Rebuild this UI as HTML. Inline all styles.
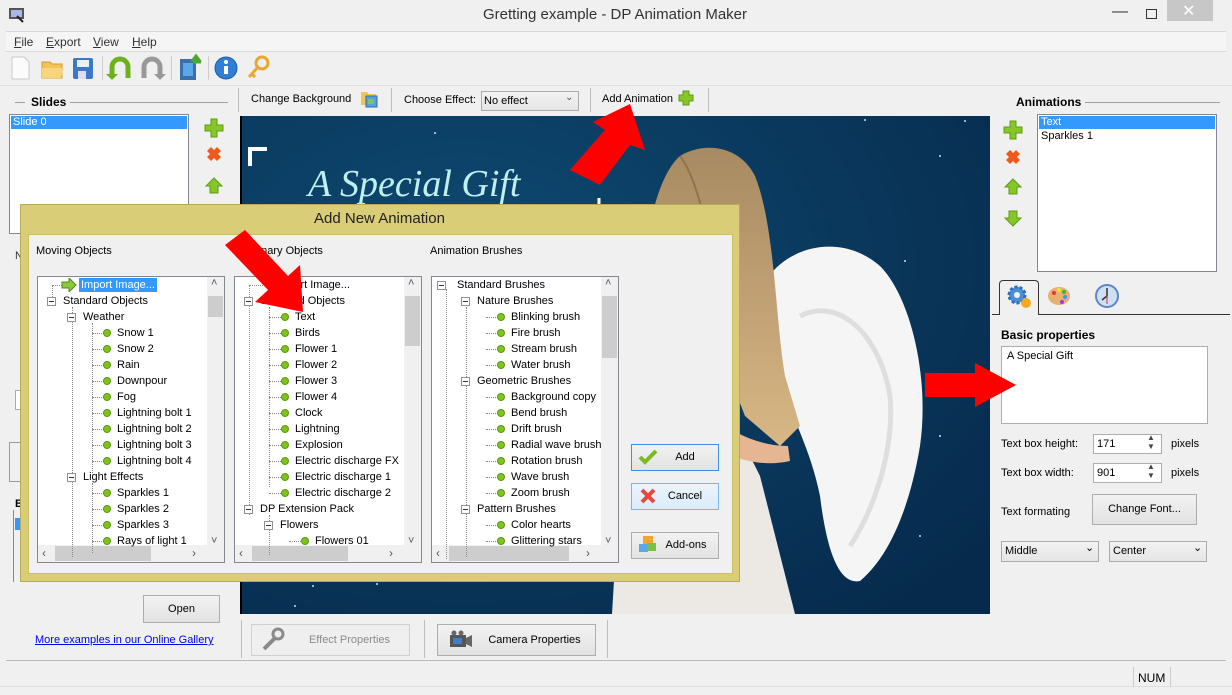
<!DOCTYPE html>
<html><head><meta charset="utf-8"><style>
*{box-sizing:border-box;margin:0;padding:0}
body{width:1232px;height:695px;overflow:hidden;background:#f0f0f0;font-family:"Liberation Sans",Arial,sans-serif;font-size:11px;color:#000;position:relative}
.a{position:absolute}
.t{position:absolute;white-space:nowrap}
.sep{position:absolute;width:1px;background:#bdbdbd}
.btn{position:absolute;border:1px solid #adadad;background:linear-gradient(#f2f2f2,#e2e2e2);text-align:center}
.tree{position:absolute;background:#fff;border:1px solid #828790;overflow:hidden}
.row{position:absolute;height:16px;line-height:16px;white-space:nowrap}
.dot{position:absolute;width:8px;height:8px;border-radius:50%;background:#7fc31c;border:1px solid #5a9a10}
.mn{position:absolute;width:9px;height:9px;border:1px solid #919191;background:#fff}
.mn:after{content:"";position:absolute;left:1px;top:3px;width:5px;height:1px;background:#333}
.hl{position:absolute;border-top:1px dotted #888;height:0}
.vl{position:absolute;border-left:1px dotted #888;width:0}
.vs{position:absolute;right:0;top:0;width:17px;bottom:17px;background:#f0f0f0}
.hs{position:absolute;left:0;right:0;bottom:0;height:17px;background:#f0f0f0}
</style></head><body>

<!-- title bar -->
<div class="a" style="left:0;top:0;width:1232px;height:31px;background:#f0f0f0"></div>
<svg class="a" style="left:8px;top:6px" width="18" height="18"><rect x="1" y="2" width="15" height="11" fill="#555"/><rect x="3" y="4" width="11" height="7" fill="#a8b8e8"/><path d="M9 10l6 6" stroke="#222" stroke-width="2"/></svg>
<div class="t" style="left:483px;top:6px;font-size:15px;color:#333">Gretting example - DP Animation Maker</div>
<div class="t" style="left:1112px;top:3px;font-size:16px;color:#333">—</div>
<div class="a" style="left:1146px;top:9px;width:11px;height:10px;border:1px solid #333"></div>
<div class="a" style="left:1167px;top:0;width:46px;height:21px;background:#c7c7c7"></div>
<div class="t" style="left:1182px;top:1px;font-size:16px;color:#fff">✕</div>

<!-- menu -->
<div class="a" style="left:6px;top:31px;width:1220px;height:21px;border-top:1px solid #d8d8d8;border-bottom:1px solid #d8d8d8;background:#f5f5f5"></div>
<div class="t" style="left:14px;top:35px;color:#333;font-size:12px"><u>F</u>ile</div>
<div class="t" style="left:46px;top:35px;color:#333;font-size:12px"><u>E</u>xport</div>
<div class="t" style="left:93px;top:35px;color:#333;font-size:12px"><u>V</u>iew</div>
<div class="t" style="left:132px;top:35px;color:#333;font-size:12px"><u>H</u>elp</div>

<!-- toolbar -->
<svg class="a" style="left:0;top:52px" width="280" height="32">
<path d="M12 5h12l5 5v17H12z" fill="#fbfbfb" stroke="#c8c8c8"/>
<path d="M42 10h8l2 2h10v14H42z" fill="#f3c35a" stroke="#d49b2a"/><path d="M42 16h22l-3 10H42z" fill="#f8d57a"/>
<rect x="73" y="6" width="20" height="21" rx="2" fill="#3c78c8"/><rect x="77" y="8" width="12" height="7" fill="#e8f0f8"/><rect x="78" y="19" width="8" height="8" fill="#dde"/>
<rect x="102" y="4" width="1" height="24" fill="#ccc"/>
<path d="M112 26V15a8 8 0 0 1 16 0v11" fill="none" stroke="#6db11c" stroke-width="5"/><path d="M106 22l6 6 6-6z" fill="#6db11c"/>
<path d="M144 26V15a8 8 0 0 1 16 0v11" fill="none" stroke="#999" stroke-width="5"/><path d="M154 22l6 6 6-6z" fill="#999"/>
<rect x="171" y="4" width="1" height="24" fill="#ccc"/>
<rect x="180" y="7" width="16" height="21" fill="#3a6fa8"/><rect x="183" y="11" width="10" height="13" fill="#5aa8e8"/><path d="M193 8h6l-3-4z M193 10h8" stroke="#4ca833" stroke-width="3" fill="#4ca833"/>
<rect x="208" y="4" width="1" height="24" fill="#ccc"/>
<circle cx="226" cy="16" r="11" fill="#2f7fd4" stroke="#1c5ea8"/><rect x="224" y="14" width="4" height="8" fill="#fff"/><circle cx="226" cy="10" r="2" fill="#fff"/>
<circle cx="262" cy="11" r="6" fill="none" stroke="#e8a830" stroke-width="3"/><path d="M258 15l-9 10M252 22l3 3" stroke="#e8a830" stroke-width="3"/>
</svg>
<div class="a" style="left:0;top:85px;width:1232px;height:1px;background:#e0e0e0"></div>

<!-- left panel -->
<div class="a" style="left:15px;top:102px;width:10px;height:1px;background:#a0a0a0"></div>
<div class="t" style="left:31px;top:95px;font-weight:bold;font-size:12px">Slides</div>
<div class="a" style="left:70px;top:102px;width:158px;height:1px;background:#a0a0a0"></div>
<div class="a" style="left:9px;top:114px;width:180px;height:120px;background:#fff;border:1px solid #828790"></div>
<div class="a" style="left:11px;top:116px;width:176px;height:13px;background:#3399ff"></div>
<div class="t" style="left:13px;top:116px;color:#fff">Slide 0</div>
<svg class="a" style="left:204px;top:118px" width="20" height="80">
<path d="M7 1h6v6h6v6h-6v6H7v-6H1V7h6z" fill="#86c628" stroke="#5e9b12"/>
<path d="M3 33l4-4 3 3 3-3 4 4-3 3 3 3-4 4-3-3-3 3-4-4 3-3z" fill="#ee5a1c"/>
<path d="M10 60l8 8h-4v7H6v-7H2z" fill="#86c628" stroke="#5e9b12"/>
</svg>
<div class="t" style="left:15px;top:250px;color:#333">N</div>
<div class="a" style="left:15px;top:390px;width:6px;height:20px;border:1px solid #aaa;background:#fff"></div>
<div class="a" style="left:9px;top:442px;width:12px;height:40px;border:1px solid #999"></div>
<div class="t" style="left:15px;top:498px;font-weight:bold">B</div>
<div class="a" style="left:15px;top:518px;width:8px;height:12px;background:#3399ff"></div>
<div class="a" style="left:13px;top:510px;width:10px;height:72px;border-left:1px solid #888"></div>
<div class="btn" style="left:143px;top:595px;width:77px;height:28px;line-height:26px">Open</div>
<div class="t" style="left:35px;top:634px;color:#00e;text-decoration:underline">More examples in our Online Gallery</div>

<!-- center toolbar -->
<div class="sep" style="left:238px;top:88px;height:24px"></div>
<div class="t" style="left:251px;top:93px">Change Background</div>
<svg class="a" style="left:360px;top:90px" width="18" height="18"><path d="M1 2h6l2 2h7v11H1z" fill="#f3c35a"/><rect x="6" y="6" width="11" height="11" fill="#5aa0dd" stroke="#2b6fb0"/><rect x="8" y="9" width="6" height="5" fill="#7ec36a"/></svg>
<div class="sep" style="left:391px;top:88px;height:24px"></div>
<div class="t" style="left:404px;top:94px">Choose Effect:</div>
<div class="a" style="left:481px;top:91px;width:98px;height:20px;border:1px solid #acacac;background:linear-gradient(#f2f2f2,#e5e5e5)"></div>
<div class="t" style="left:484px;top:95px">No effect</div>
<div class="t" style="left:565px;top:92px;font-size:10px;color:#555">⌄</div>
<div class="sep" style="left:590px;top:88px;height:24px"></div>
<div class="t" style="left:602px;top:93px">Add Animation</div>
<svg class="a" style="left:678px;top:90px" width="16" height="16"><path d="M5 1h6v4h4v6h-4v4H5v-4H1V5h4z" fill="#86c628" stroke="#5e9b12"/></svg>
<div class="sep" style="left:708px;top:88px;height:24px"></div>

<!-- canvas -->
<svg class="a" style="left:240px;top:116px" width="750" height="498">
<defs><radialGradient id="bg" cx="0.3" cy="0.3" r="0.9"><stop offset="0" stop-color="#0f4a72"/><stop offset="1" stop-color="#062a4c"/></radialGradient>
<linearGradient id="hair" x1="0" x2="0" y1="0" y2="1"><stop offset="0" stop-color="#a88a62"/><stop offset="1" stop-color="#d8b785"/></linearGradient></defs>
<rect width="750" height="498" fill="url(#bg)"/>
<rect x="0" y="0" width="2" height="498" fill="#000"/>
<!-- dress -->
<path d="M385 280 L480 280 L520 360 L555 498 L372 498 Z" fill="#ece8e3"/>
<!-- wings -->
<path d="M520 175 C540 130 600 115 640 150 C670 180 690 260 680 330 C670 390 650 440 620 465 C595 470 585 420 580 380 C570 330 550 300 540 260 C525 230 515 200 520 175Z" fill="#f5f5f5"/>
<path d="M560 200 C600 180 640 220 650 280 C655 340 630 400 610 430" fill="none" stroke="#dedede" stroke-width="5"/>
<!-- hair -->
<path d="M400 300 C392 200 405 70 440 40 C465 25 500 30 515 60 C535 110 535 200 545 260 L560 310 L540 330 L505 300 L470 210 L440 250 L420 300Z" fill="url(#hair)"/>
<path d="M440 40 C455 60 465 100 470 140" stroke="#8f7450" stroke-width="2" fill="none"/>
<!-- arm -->
<path d="M470 300 C495 318 520 330 548 330 L550 345 C520 352 485 342 462 322Z" fill="#e6b692"/>
<text x="68" y="80" font-family="Liberation Serif,serif" font-style="italic" font-size="38" fill="#bff0f0">A Special Gift</text>
<path d="M10 50V33h17" fill="none" stroke="#fff" stroke-width="4"/>
<path d="M359 88v-6M10 88v8" stroke="#fff" stroke-width="3"/>
<g fill="#cde">
<circle cx="195" cy="17" r="1"/><circle cx="367" cy="4" r="1"/><circle cx="625" cy="4" r="1"/><circle cx="725" cy="5" r="1"/><circle cx="700" cy="40" r="1"/><circle cx="665" cy="145" r="1"/><circle cx="700" cy="320" r="1"/><circle cx="680" cy="420" r="1"/><circle cx="73" cy="470" r="1"/><circle cx="137" cy="468" r="1"/><circle cx="55" cy="490" r="1"/>
</g>
</svg>

<!-- bottom center buttons -->
<div class="sep" style="left:241px;top:620px;height:38px"></div>
<div class="btn" style="left:251px;top:624px;width:159px;height:32px;background:#efefef;border-color:#d0d0d0;color:#8a8a8a;line-height:30px;padding-left:38px">Effect Properties</div>
<svg class="a" style="left:260px;top:627px" width="26" height="26"><path d="M4 22l12-12" stroke="#8a8a8a" stroke-width="4"/><circle cx="18" cy="7" r="5" fill="none" stroke="#8a8a8a" stroke-width="3"/></svg>
<div class="sep" style="left:424px;top:620px;height:38px"></div>
<div class="btn" style="left:437px;top:624px;width:159px;height:32px;line-height:30px;padding-left:36px">Camera Properties</div>
<svg class="a" style="left:448px;top:630px" width="26" height="20"><rect x="2" y="5" width="16" height="12" fill="#555"/><rect x="5" y="8" width="9" height="6" fill="#3a7fd0"/><path d="M18 8l6-3v12l-6-3z" fill="#666"/><circle cx="6" cy="3" r="2.5" fill="#666"/><circle cx="13" cy="3" r="2.5" fill="#666"/></svg>
<div class="sep" style="left:607px;top:620px;height:38px"></div>

<!-- right panel -->
<div class="t" style="left:1016px;top:95px;font-weight:bold;font-size:12px">Animations</div>
<div class="a" style="left:1085px;top:102px;width:135px;height:1px;background:#a0a0a0"></div>
<div class="a" style="left:1037px;top:114px;width:180px;height:158px;background:#fff;border:1px solid #828790"></div>
<div class="a" style="left:1039px;top:116px;width:176px;height:13px;background:#3399ff"></div>
<div class="t" style="left:1041px;top:116px;color:#fff">Text</div>
<div class="t" style="left:1041px;top:130px">Sparkles 1</div>
<svg class="a" style="left:1003px;top:120px" width="20" height="110">
<path d="M7 1h6v6h6v6h-6v6H7v-6H1V7h6z" fill="#86c628" stroke="#5e9b12"/>
<path d="M3 34l4-4 3 3 3-3 4 4-3 3 3 3-4 4-3-3-3 3-4-4 3-3z" fill="#ee5a1c"/>
<path d="M10 59l8 8h-4v7H6v-7H2z" fill="#86c628" stroke="#5e9b12"/>
<path d="M10 106l8-8h-4v-7H6v7H2z" fill="#86c628" stroke="#5e9b12"/>
</svg>
<div class="a" style="left:992px;top:314px;width:238px;height:1px;background:#333"></div>
<div class="a" style="left:999px;top:280px;width:40px;height:35px;border:1px solid #333;border-bottom:none;border-radius:4px 4px 0 0;background:#f0f0f0"></div>
<svg class="a" style="left:1005px;top:283px" width="120" height="28">
<circle cx="12" cy="12" r="8" fill="#4b8fd8" stroke="#2d6fb8" stroke-width="3" stroke-dasharray="3 2"/><circle cx="12" cy="12" r="3" fill="#f0f0f0"/><circle cx="21" cy="20" r="5" fill="#f3a820"/>
<ellipse cx="54" cy="13" rx="11" ry="9" fill="#e8b070"/><circle cx="49" cy="10" r="2" fill="#e33"/><circle cx="54" cy="7" r="2" fill="#fd3"/><circle cx="59" cy="9" r="2" fill="#3b3"/><circle cx="60" cy="14" r="2" fill="#39f"/><circle cx="57" cy="19" r="2" fill="#a3d"/>
<circle cx="102" cy="13" r="11" fill="#cfe0f5" stroke="#5a88c8" stroke-width="2"/><path d="M102 5v8l-5 4" stroke="#333" stroke-width="1.5" fill="none"/><path d="M102 13v8" stroke="#c33"/>
</svg>
<div class="t" style="left:1001px;top:328px;font-weight:bold;font-size:12px">Basic properties</div>
<div class="a" style="left:1001px;top:346px;width:207px;height:78px;background:#fff;border:1px solid #abadb3"></div>
<div class="t" style="left:1007px;top:350px">A Special Gift</div>
<div class="t" style="left:1001px;top:438px">Text box height:</div>
<div class="a" style="left:1093px;top:434px;width:69px;height:20px;background:#fff;border:1px solid #abadb3"></div>
<div class="t" style="left:1097px;top:438px">171</div>
<div class="t" style="left:1147px;top:433px;font-size:8px;line-height:9px;color:#444">▲<br>▼</div>
<div class="t" style="left:1171px;top:438px">pixels</div>
<div class="t" style="left:1001px;top:467px">Text box width:</div>
<div class="a" style="left:1093px;top:463px;width:69px;height:20px;background:#fff;border:1px solid #abadb3"></div>
<div class="t" style="left:1097px;top:467px">901</div>
<div class="t" style="left:1147px;top:462px;font-size:8px;line-height:9px;color:#444">▲<br>▼</div>
<div class="t" style="left:1171px;top:467px">pixels</div>
<div class="t" style="left:1001px;top:506px">Text formating</div>
<div class="btn" style="left:1092px;top:494px;width:105px;height:31px;line-height:29px">Change Font...</div>
<div class="a" style="left:1001px;top:541px;width:98px;height:21px;border:1px solid #acacac;background:linear-gradient(#f2f2f2,#e5e5e5)"></div>
<div class="t" style="left:1005px;top:545px">Middle</div>
<div class="t" style="left:1085px;top:541px;font-size:11px">⌄</div>
<div class="a" style="left:1109px;top:541px;width:98px;height:21px;border:1px solid #acacac;background:linear-gradient(#f2f2f2,#e5e5e5)"></div>
<div class="t" style="left:1113px;top:545px">Center</div>
<div class="t" style="left:1193px;top:541px;font-size:11px">⌄</div>

<!-- status bar -->
<div class="a" style="left:6px;top:660px;width:1220px;height:1px;background:#bbb"></div>
<div class="a" style="left:0;top:686px;width:1232px;height:1px;background:#ddd"></div>
<div class="a" style="left:1133px;top:667px;width:38px;height:20px;border-left:1px solid #ccc;border-right:1px solid #ccc"></div>
<div class="t" style="left:1138px;top:671px;font-size:12px">NUM</div>

<!-- dialog -->
<div class="a" style="left:20px;top:204px;width:720px;height:378px;background:#d9cd78;border:1px solid #b8a958"></div>
<div class="t" style="left:314px;top:210px;font-size:15px;color:#222">Add New Animation</div>
<div class="a" style="left:28px;top:234px;width:705px;height:340px;background:#f0f0f0;border:1px solid #c9bd69"></div>
<div class="t" style="left:36px;top:245px">Moving Objects</div>
<div class="t" style="left:233px;top:245px">Stationary Objects</div>
<div class="t" style="left:430px;top:245px">Animation Brushes</div>

<!-- tree 1 -->
<div class="tree" style="left:37px;top:276px;width:188px;height:287px">
 <div class="vs"><div class="t" style="left:4px;top:0;font-size:11px;color:#555">˄</div><div class="a" style="left:1px;top:19px;width:15px;height:21px;background:#cdcdcd"></div><div class="t" style="left:4px;bottom:-2px;font-size:11px;color:#555">˅</div></div>
 <div class="hs"><div class="t" style="left:4px;top:1px;font-size:12px;color:#555">‹</div><div class="a" style="left:17px;top:1px;width:96px;height:15px;background:#cdcdcd"></div><div class="t" style="left:154px;top:1px;font-size:12px;color:#555">›</div></div>
 <div class="vl" style="left:14px;top:8px;height:20px"></div>
 <div class="vl" style="left:34px;top:30px;height:250px"></div>
 <div class="vl" style="left:54px;top:46px;height:150px"></div>
 <div class="vl" style="left:54px;top:206px;height:70px"></div>
 <div class="hl" style="left:14px;top:8px;width:12px"></div>
 <svg class="a" style="left:23px;top:1px" width="16" height="14"><path d="M1 4h7V0l7 7-7 7v-4H1z" fill="#8bc83a" stroke="#4f8a16"/></svg>
 <div class="row" style="left:41px;background:#3399ff;color:#fff;padding:0 2px;height:14px;line-height:14px;top:1px">Import Image...</div>
 <div class="mn" style="left:9px;top:20px"></div><div class="row" style="left:25px;top:16px">Standard Objects</div>
 <div class="mn" style="left:29px;top:36px"></div><div class="row" style="left:45px;top:32px">Weather</div>
 <div class="mn" style="left:29px;top:196px"></div><div class="row" style="left:45px;top:192px">Light Effects</div>
 <div class="hl" style="left:54px;top:56px;width:12px"></div><div class="dot" style="left:65px;top:52px"></div><div class="row" style="left:79px;top:48px">Snow 1</div>
 <div class="hl" style="left:54px;top:72px;width:12px"></div><div class="dot" style="left:65px;top:68px"></div><div class="row" style="left:79px;top:64px">Snow 2</div>
 <div class="hl" style="left:54px;top:88px;width:12px"></div><div class="dot" style="left:65px;top:84px"></div><div class="row" style="left:79px;top:80px">Rain</div>
 <div class="hl" style="left:54px;top:104px;width:12px"></div><div class="dot" style="left:65px;top:100px"></div><div class="row" style="left:79px;top:96px">Downpour</div>
 <div class="hl" style="left:54px;top:120px;width:12px"></div><div class="dot" style="left:65px;top:116px"></div><div class="row" style="left:79px;top:112px">Fog</div>
 <div class="hl" style="left:54px;top:136px;width:12px"></div><div class="dot" style="left:65px;top:132px"></div><div class="row" style="left:79px;top:128px">Lightning bolt 1</div>
 <div class="hl" style="left:54px;top:152px;width:12px"></div><div class="dot" style="left:65px;top:148px"></div><div class="row" style="left:79px;top:144px">Lightning bolt 2</div>
 <div class="hl" style="left:54px;top:168px;width:12px"></div><div class="dot" style="left:65px;top:164px"></div><div class="row" style="left:79px;top:160px">Lightning bolt 3</div>
 <div class="hl" style="left:54px;top:184px;width:12px"></div><div class="dot" style="left:65px;top:180px"></div><div class="row" style="left:79px;top:176px">Lightning bolt 4</div>
 <div class="hl" style="left:54px;top:216px;width:12px"></div><div class="dot" style="left:65px;top:212px"></div><div class="row" style="left:79px;top:208px">Sparkles 1</div>
 <div class="hl" style="left:54px;top:232px;width:12px"></div><div class="dot" style="left:65px;top:228px"></div><div class="row" style="left:79px;top:224px">Sparkles 2</div>
 <div class="hl" style="left:54px;top:248px;width:12px"></div><div class="dot" style="left:65px;top:244px"></div><div class="row" style="left:79px;top:240px">Sparkles 3</div>
 <div class="hl" style="left:54px;top:264px;width:12px"></div><div class="dot" style="left:65px;top:260px"></div><div class="row" style="left:79px;top:256px">Rays of light 1</div>
</div>

<!-- tree 2 -->
<div class="tree" style="left:234px;top:276px;width:188px;height:287px">
 <div class="vs"><div class="t" style="left:4px;top:0;font-size:11px;color:#555">˄</div><div class="a" style="left:1px;top:19px;width:15px;height:50px;background:#cdcdcd"></div><div class="t" style="left:4px;bottom:-2px;font-size:11px;color:#555">˅</div></div>
 <div class="hs"><div class="t" style="left:4px;top:1px;font-size:12px;color:#555">‹</div><div class="a" style="left:17px;top:1px;width:96px;height:15px;background:#cdcdcd"></div><div class="t" style="left:154px;top:1px;font-size:12px;color:#555">›</div></div>
 <div class="vl" style="left:14px;top:8px;height:230px"></div>
 <div class="vl" style="left:34px;top:30px;height:180px"></div>
 <div class="vl" style="left:34px;top:238px;height:40px"></div>
 <div class="hl" style="left:14px;top:8px;width:20px"></div><div class="row" style="left:41px;top:0">Import Image...</div>
 <div class="mn" style="left:9px;top:20px"></div><div class="row" style="left:25px;top:16px">Standard Objects</div>
 <div class="mn" style="left:9px;top:228px"></div><div class="row" style="left:25px;top:224px">DP Extension Pack</div>
 <div class="mn" style="left:29px;top:244px"></div><div class="row" style="left:45px;top:240px">Flowers</div>
 <div class="hl" style="left:34px;top:40px;width:12px"></div><div class="dot" style="left:46px;top:36px"></div><div class="row" style="left:60px;top:32px">Text</div>
 <div class="hl" style="left:34px;top:56px;width:12px"></div><div class="dot" style="left:46px;top:52px"></div><div class="row" style="left:60px;top:48px">Birds</div>
 <div class="hl" style="left:34px;top:72px;width:12px"></div><div class="dot" style="left:46px;top:68px"></div><div class="row" style="left:60px;top:64px">Flower 1</div>
 <div class="hl" style="left:34px;top:88px;width:12px"></div><div class="dot" style="left:46px;top:84px"></div><div class="row" style="left:60px;top:80px">Flower 2</div>
 <div class="hl" style="left:34px;top:104px;width:12px"></div><div class="dot" style="left:46px;top:100px"></div><div class="row" style="left:60px;top:96px">Flower 3</div>
 <div class="hl" style="left:34px;top:120px;width:12px"></div><div class="dot" style="left:46px;top:116px"></div><div class="row" style="left:60px;top:112px">Flower 4</div>
 <div class="hl" style="left:34px;top:136px;width:12px"></div><div class="dot" style="left:46px;top:132px"></div><div class="row" style="left:60px;top:128px">Clock</div>
 <div class="hl" style="left:34px;top:152px;width:12px"></div><div class="dot" style="left:46px;top:148px"></div><div class="row" style="left:60px;top:144px">Lightning</div>
 <div class="hl" style="left:34px;top:168px;width:12px"></div><div class="dot" style="left:46px;top:164px"></div><div class="row" style="left:60px;top:160px">Explosion</div>
 <div class="hl" style="left:34px;top:184px;width:12px"></div><div class="dot" style="left:46px;top:180px"></div><div class="row" style="left:60px;top:176px">Electric discharge FX</div>
 <div class="hl" style="left:34px;top:200px;width:12px"></div><div class="dot" style="left:46px;top:196px"></div><div class="row" style="left:60px;top:192px">Electric discharge 1</div>
 <div class="hl" style="left:34px;top:216px;width:12px"></div><div class="dot" style="left:46px;top:212px"></div><div class="row" style="left:60px;top:208px">Electric discharge 2</div>
 <div class="hl" style="left:54px;top:264px;width:12px"></div><div class="dot" style="left:66px;top:260px"></div><div class="row" style="left:80px;top:256px">Flowers 01</div>
</div>

<!-- tree 3 -->
<div class="tree" style="left:431px;top:276px;width:188px;height:287px">
 <div class="vs"><div class="t" style="left:4px;top:0;font-size:11px;color:#555">˄</div><div class="a" style="left:1px;top:19px;width:15px;height:62px;background:#cdcdcd"></div><div class="t" style="left:4px;bottom:-2px;font-size:11px;color:#555">˅</div></div>
 <div class="hs"><div class="t" style="left:4px;top:1px;font-size:12px;color:#555">‹</div><div class="a" style="left:17px;top:1px;width:120px;height:15px;background:#cdcdcd"></div><div class="t" style="left:154px;top:1px;font-size:12px;color:#555">›</div></div>
 <div class="vl" style="left:14px;top:12px;height:270px"></div>
 <div class="vl" style="left:34px;top:30px;height:250px"></div>
 <div class="mn" style="left:5px;top:4px"></div><div class="row" style="left:25px;top:0">Standard Brushes</div>
 <div class="mn" style="left:29px;top:20px"></div><div class="row" style="left:45px;top:16px">Nature Brushes</div>
 <div class="mn" style="left:29px;top:100px"></div><div class="row" style="left:45px;top:96px">Geometric Brushes</div>
 <div class="mn" style="left:29px;top:228px"></div><div class="row" style="left:45px;top:224px">Pattern Brushes</div>
 <div class="hl" style="left:54px;top:40px;width:12px"></div><div class="dot" style="left:65px;top:36px"></div><div class="row" style="left:79px;top:32px">Blinking brush</div>
 <div class="hl" style="left:54px;top:56px;width:12px"></div><div class="dot" style="left:65px;top:52px"></div><div class="row" style="left:79px;top:48px">Fire brush</div>
 <div class="hl" style="left:54px;top:72px;width:12px"></div><div class="dot" style="left:65px;top:68px"></div><div class="row" style="left:79px;top:64px">Stream brush</div>
 <div class="hl" style="left:54px;top:88px;width:12px"></div><div class="dot" style="left:65px;top:84px"></div><div class="row" style="left:79px;top:80px">Water brush</div>
 <div class="hl" style="left:54px;top:120px;width:12px"></div><div class="dot" style="left:65px;top:116px"></div><div class="row" style="left:79px;top:112px">Background copy</div>
 <div class="hl" style="left:54px;top:136px;width:12px"></div><div class="dot" style="left:65px;top:132px"></div><div class="row" style="left:79px;top:128px">Bend brush</div>
 <div class="hl" style="left:54px;top:152px;width:12px"></div><div class="dot" style="left:65px;top:148px"></div><div class="row" style="left:79px;top:144px">Drift brush</div>
 <div class="hl" style="left:54px;top:168px;width:12px"></div><div class="dot" style="left:65px;top:164px"></div><div class="row" style="left:79px;top:160px">Radial wave brush</div>
 <div class="hl" style="left:54px;top:184px;width:12px"></div><div class="dot" style="left:65px;top:180px"></div><div class="row" style="left:79px;top:176px">Rotation brush</div>
 <div class="hl" style="left:54px;top:200px;width:12px"></div><div class="dot" style="left:65px;top:196px"></div><div class="row" style="left:79px;top:192px">Wave brush</div>
 <div class="hl" style="left:54px;top:216px;width:12px"></div><div class="dot" style="left:65px;top:212px"></div><div class="row" style="left:79px;top:208px">Zoom brush</div>
 <div class="hl" style="left:54px;top:248px;width:12px"></div><div class="dot" style="left:65px;top:244px"></div><div class="row" style="left:79px;top:240px">Color hearts</div>
 <div class="hl" style="left:54px;top:264px;width:12px"></div><div class="dot" style="left:65px;top:260px"></div><div class="row" style="left:79px;top:256px">Glittering stars</div>
</div>

<!-- dialog buttons -->
<div class="btn" style="left:631px;top:444px;width:88px;height:27px;border-color:#3c8ee8;line-height:25px;padding-left:20px">Add</div>
<svg class="a" style="left:638px;top:449px" width="20" height="16"><path d="M2 8l5 5L18 2" fill="none" stroke="#7cbb1e" stroke-width="4"/></svg>
<div class="btn" style="left:631px;top:483px;width:88px;height:27px;border-color:#7eb4ea;background:linear-gradient(#eaf4fc,#dcecfc);line-height:25px;padding-left:20px">Cancel</div>
<svg class="a" style="left:639px;top:487px" width="18" height="18"><path d="M3 3l12 12M15 3L3 15" stroke="#e8483a" stroke-width="4"/></svg>
<div class="btn" style="left:631px;top:532px;width:88px;height:27px;line-height:25px;padding-left:22px">Add-ons</div>
<svg class="a" style="left:638px;top:535px" width="20" height="20"><rect x="5" y="1" width="10" height="8" fill="#f3a530"/><rect x="1" y="9" width="9" height="8" fill="#5aa7e8"/><rect x="9" y="8" width="9" height="8" fill="#7cc040"/></svg>

<!-- red arrows -->
<svg class="a" style="left:0;top:0;pointer-events:none" width="1232" height="695">
<g fill="#f00">
<polygon points="630,104 645,150 630,145 600,185 570,170 605,130 593,122"/>
<polygon points="303,312 255,302 268,290 225,245 245,230 288,276 300,265"/>
<polygon points="1016,385 975,363 975,373 925,373 925,397 975,397 975,407"/>
</g>
</svg>
</body></html>
